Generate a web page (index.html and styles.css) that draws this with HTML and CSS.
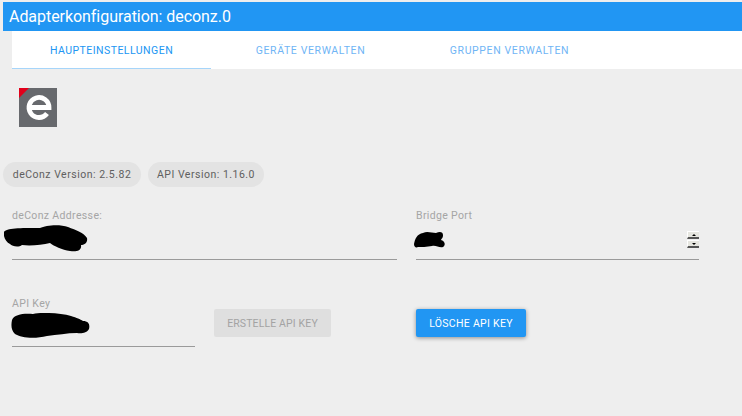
FILE: index.html
```html
<!DOCTYPE html>
<html lang="de">
<head>
<meta charset="utf-8">
<title>Adapterkonfiguration: deconz.0</title>
<link rel="stylesheet" href="styles.css">
</head>
<body>
<header class="title">Adapterkonfiguration: deconz.0</header>
<nav class="tabs">
  <div class="tab tab-active">HAUPTEINSTELLUNGEN</div>
  <div class="tab">GERÄTE VERWALTEN</div>
  <div class="tab">GRUPPEN VERWALTEN</div>
</nav>
<div class="logo-row">
  <svg class="logo" width="38" height="39" viewBox="0 0 38 39">
    <rect width="38" height="39" fill="#67696d"/>
    <path d="M0 0H10L0 10Z" fill="#e2001a"/>
    <path d="M28 25.5A10 10 0 1 1 30 19.5H10" fill="none" stroke="#fff" stroke-width="4.8"/>
  </svg>
</div>
<div class="chips">
  <span class="chip chip-a">deConz Version: 2.5.82</span>
  <span class="chip chip-b">API Version: 1.16.0</span>
</div>
<div class="row row-top">
  <div class="field field-address">
    <div class="label">deConz Addresse:</div>
    <div class="input">
      <svg class="blob" width="84" height="27" viewBox="0 0 84 27">
        <path d="M0 7C2 3 16 3 36 3C42 0 56 -1 64 2C72 5 80 8 83 13C84 18 80 20 77 20C78 26 72 27 66 26C58 25 50 21 46 18C38 20 26 21 18 20C14 23 8 21 6 19C2 17 -1 12 0 7Z" fill="#000"/>
      </svg>
    </div>
  </div>
  <div class="field field-port">
    <div class="label">Bridge Port</div>
    <div class="input">
      <svg class="blob blob-port" width="32" height="17" viewBox="0 0 32 17">
        <path d="M0 13C1 8 3 3 9 2C13 0 18 2 22 2C26 0 29 1 29 4C29 7 28 7 27 9C31 10 32 14 29 16C25 17 22 14 18 15C13 16 7 16 4 16C2 17 0 16 0 13Z" fill="#000"/>
      </svg>
      <div class="spinner">
        <span class="spin"><i class="arrow-up"></i></span>
        <span class="spin"><i class="arrow-down"></i></span>
      </div>
    </div>
  </div>
</div>
<div class="row row-bottom">
  <div class="field field-key">
    <div class="label">API Key</div>
    <div class="input">
      <svg class="blob blob-key" width="79" height="25" viewBox="0 0 79 25">
        <path d="M1 7C3 1 14 0 22 1C32 -1 50 0 60 3C66 5 69 6 72 8C78 8 79 12 78 16C76 20 70 21 66 20C56 20 46 22 36 23C24 26 10 25 4 21C0 17 0 12 1 7Z" fill="#000"/>
      </svg>
    </div>
  </div>
  <button class="btn btn-disabled" type="button">ERSTELLE API KEY</button>
  <button class="btn btn-primary" type="button">LÖSCHE API KEY</button>
</div>
</body>
</html>
```
FILE: styles.css
```css
* { box-sizing: border-box; }
html, body { margin: 0; height: 416px; overflow: hidden; }
body { background: #eeeeee; font-family: Roboto, "Liberation Sans", sans-serif; padding-top: 2px; }

.title {
  margin-left: 3px;
  height: 29px;
  background: #2196f3;
  color: #fff;
  font-size: 16px;
  line-height: 29px;
  padding-left: 6px;
  letter-spacing: -0.05px;
}
.tabs { display: flex; margin-left: 12px; height: 38px; background: #fff; }
.tab {
  width: 199px;
  text-align: center;
  font-size: 10.5px;
  line-height: 39px;
  letter-spacing: 0.62px;
  color: #70b5f5;
}
.tab-active { color: #2196f3; border-bottom: 1px solid #a6d5fa; letter-spacing: 0.47px; }

.logo-row { padding-left: 19px; margin-top: 19px; height: 39px; }
.logo { display: block; }

.chips { display: flex; gap: 7px; margin: 35px 0 0 3px; }
.chip {
  height: 25px;
  border-radius: 13px;
  background: #e3e3e3;
  color: #5f5f5f;
  font-size: 10.5px;
  line-height: 25px;
  letter-spacing: 0.5px;
  text-align: center;
}
.chip-a { width: 138px; }
.chip-b { width: 116px; }

.row { display: flex; align-items: flex-start; margin-left: 12px; }
.row-top { margin-top: 23px; gap: 19px; }
.row-bottom { margin-top: 38px; }

.field { display: flex; flex-direction: column; }
.field-address { width: 385px; }
.field-port { width: 283px; }
.field-key { width: 183px; }

.label { font-size: 10.5px; line-height: 12px; letter-spacing: 0.35px; color: #a5a5a5; height: 12px; }
.input { position: relative; height: 38px; border-bottom: 1px solid #9a9a9a; }
.field-key .input { height: 37px; }

.blob { position: absolute; left: -8px; top: 3px; }
.blob-port { left: -2px; top: 9px; }
.blob-key { left: -1px; top: 3px; }

.spinner { position: absolute; right: 0; top: 9px; width: 12px; display: flex; flex-direction: column; gap: 1px; }
.spin {
  display: flex;
  align-items: center;
  justify-content: center;
  height: 8px;
  background: #e6e6e0;
  border-left: 1px solid #fff;
  border-top: 1px solid #fff;
  border-bottom: 2px solid #555;
}
.arrow-up { border: 2px solid transparent; border-top: 0; border-bottom: 2px solid #000; }
.arrow-down { border: 2px solid transparent; border-bottom: 0; border-top: 2px solid #000; }

.btn {
  height: 28px;
  border: 0;
  border-radius: 2px;
  font-family: inherit;
  font-size: 10.5px;
  font-weight: 400;
  padding: 0;
  margin-top: 11px;
}
.btn-disabled { width: 117px; margin-left: 19px; background: #dfdfdf; color: #a3a3a3; letter-spacing: 0.13px; }
.btn-primary {
  width: 110px;
  margin-left: 85px;
  background: #2196f3;
  color: #fff;
  letter-spacing: 0.3px;
  box-shadow: 0 1px 4px rgba(0,0,0,.4);
}
```
